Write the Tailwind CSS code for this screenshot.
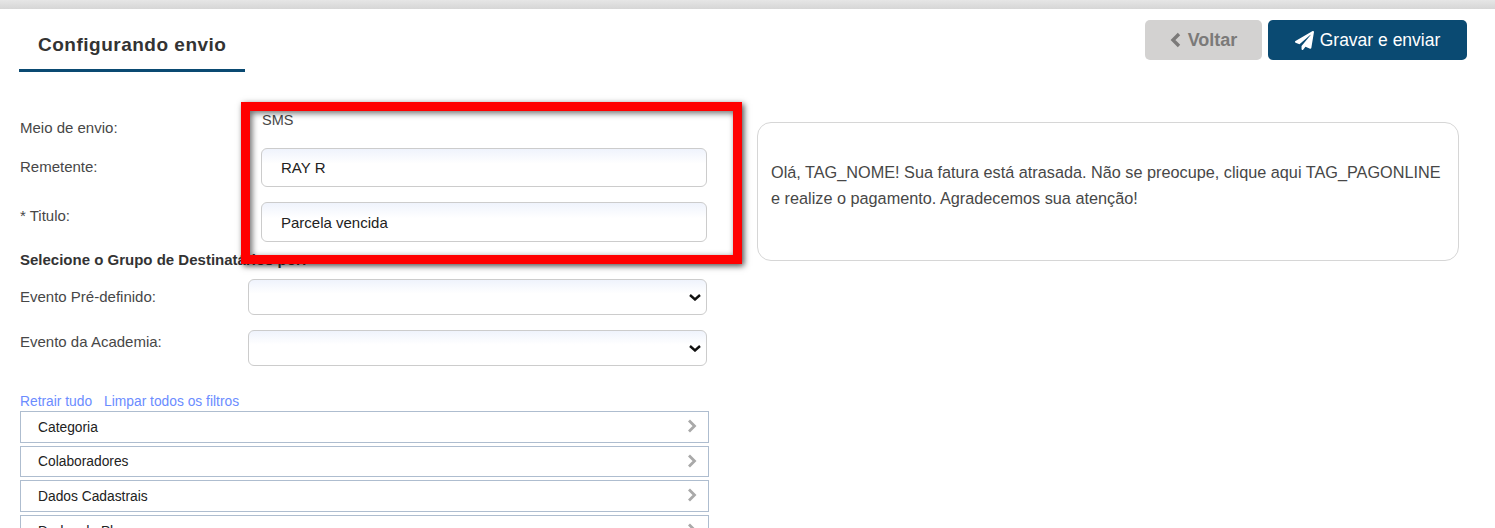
<!DOCTYPE html>
<html lang="pt-BR">
<head>
  <meta charset="UTF-8" />
  <title>Configurando envio</title>
  <script src="https://cdn.jsdelivr.net/npm/@tailwindcss/browser@4"></script>
</head>
<body class="relative h-[528px] overflow-hidden bg-white font-['Liberation_Sans',Arial,sans-serif] text-[15px] text-[#474747]">

  <!-- Top bar -->
  <div class="h-[9px] bg-gradient-to-b from-[#e6e6e6] to-[#d6d6d6]"></div>

  <!-- Header -->
  <div class="flex h-[63px] justify-between pl-[19px] pr-[28px]">
    <div class="h-[63px] w-[226px] border-b-[3px] border-[#0a4a72] pl-[19px] pt-[25px] text-[19px] leading-[22px] font-bold tracking-[0.5px] text-[#333]">Configurando envio</div>
    <div class="flex gap-[6px] pt-[11px]">
      <button class="flex h-[40px] w-[117px] items-center justify-center gap-[7px] rounded-[5px] bg-[#d3d2d1] text-[18px] font-bold text-[#7b7a79]">
        <svg class="h-[16px] w-[11px]" viewBox="0 0 11 16" fill="none" stroke="currentColor" stroke-width="3.4"><polyline points="9,2 3,8 9,14"/></svg>
        Voltar
      </button>
      <button class="flex h-[40px] w-[199px] items-center justify-center gap-[6px] rounded-[5px] bg-[#0a4a72] text-[17.5px] text-white">
        <svg class="h-[19px] w-[19px]" viewBox="0 0 512 512" fill="currentColor"><path d="M476 3.2L12.5 270.6c-18.1 10.4-15.8 35.6 2.2 43.2L121 358.4l287.3-253.2c5.5-4.9 13.3 2.6 8.6 8.3L176 407v80.5c0 23.6 28.5 32.9 42.5 15.8L282 426l124.6 52.2c14.2 6 30.4-2.9 33-18.2l72-432C515 7.8 493.3-6.8 476 3.2z"/></svg>
        Gravar e enviar
      </button>
    </div>
  </div>

  <!-- Body -->
  <div class="flex pl-[20px] pt-[39px]">
    <div class="w-[689px]">
      <div class="flex h-[37px]">
        <div class="w-[241px] pt-[9px] leading-[16px]">Meio de envio:</div>
        <div class="pl-px pt-px text-[14.5px] leading-[16px]">SMS</div>
      </div>
      <div class="flex h-[54px]">
        <div class="w-[241px] pt-[11px] leading-[16px]">Remetente:</div>
        <div class="flex h-[39px] w-[446px] items-center rounded-[6px] border border-[#ccc] bg-gradient-to-b from-[#eff3fc] to-white to-40% pl-[19px] pt-[1px] text-[#222]">RAY R</div>
      </div>
      <div class="flex h-[50px]">
        <div class="w-[241px] pt-[6px] leading-[16px]">* Titulo:</div>
        <div class="flex h-[40px] w-[446px] items-center rounded-[6px] border border-[#ccc] bg-gradient-to-b from-[#eff3fc] to-white to-40% pl-[19px] pt-[3px] text-[#222]">Parcela vencida</div>
      </div>
      <div class="h-[27px] text-[15px] leading-[16px] font-bold text-[#333]">Selecione o Grupo de Destinatários por:</div>
      <div class="flex h-[51px]">
        <div class="w-[228px] pt-[10px] leading-[16px]">Evento Pré-definido:</div>
        <div class="relative h-[36px] w-[459px]">
          <select class="h-[36px] w-full appearance-none rounded-[6px] border border-[#ccc] bg-gradient-to-b from-[#eff3fc] to-white to-40%"></select>
          <svg class="pointer-events-none absolute right-[6px] top-[15px] h-[7px] w-[12px]" viewBox="0 0 12 7" fill="none" stroke="#111" stroke-width="2.4"><polyline points="1,1 6,5.5 11,1"/></svg>
        </div>
      </div>
      <div class="flex h-[63px]">
        <div class="w-[228px] pt-[4px] leading-[16px]">Evento da Academia:</div>
        <div class="relative h-[36px] w-[459px]">
          <select class="h-[36px] w-full appearance-none rounded-[6px] border border-[#ccc] bg-gradient-to-b from-[#eff3fc] to-white to-40%"></select>
          <svg class="pointer-events-none absolute right-[6px] top-[15px] h-[7px] w-[12px]" viewBox="0 0 12 7" fill="none" stroke="#111" stroke-width="2.4"><polyline points="1,1 6,5.5 11,1"/></svg>
        </div>
      </div>
      <div class="flex h-[18px] gap-[12px] pt-px text-[13.8px] leading-[16px] text-[#6b8cff]">
        <a>Retrair tudo</a>
        <a>Limpar todos os filtros</a>
      </div>
      <div class="flex flex-col gap-[3px] text-[13.8px] text-[#222]">
        <div class="flex h-[32px] items-center justify-between border border-[#aebdcf] pl-[17px] pr-[11px]">
          <span class="pt-[2px]">Categoria</span>
          <svg class="h-[14px] w-[10px] -translate-y-px text-[#a9a9a9]" viewBox="0 0 10 14" fill="none" stroke="currentColor" stroke-width="2.8"><polyline points="2,1.5 7.5,7 2,12.5"/></svg>
        </div>
        <div class="flex h-[31px] items-center justify-between border border-[#aebdcf] pl-[17px] pr-[11px]">
          <span class="pt-[2px]">Colaboradores</span>
          <svg class="h-[14px] w-[10px] -translate-y-px text-[#a9a9a9]" viewBox="0 0 10 14" fill="none" stroke="currentColor" stroke-width="2.8"><polyline points="2,1.5 7.5,7 2,12.5"/></svg>
        </div>
        <div class="flex h-[32px] items-center justify-between border border-[#aebdcf] pl-[17px] pr-[11px]">
          <span class="pt-[2px]">Dados Cadastrais</span>
          <svg class="h-[14px] w-[10px] -translate-y-px text-[#a9a9a9]" viewBox="0 0 10 14" fill="none" stroke="currentColor" stroke-width="2.8"><polyline points="2,1.5 7.5,7 2,12.5"/></svg>
        </div>
        <div class="flex h-[32px] items-center justify-between border border-[#aebdcf] pl-[17px] pr-[11px]">
          <span class="pt-[2px]">Dados de Planos</span>
          <svg class="h-[14px] w-[10px] -translate-y-px text-[#a9a9a9]" viewBox="0 0 10 14" fill="none" stroke="currentColor" stroke-width="2.8"><polyline points="2,1.5 7.5,7 2,12.5"/></svg>
        </div>
      </div>
    </div>

    <!-- Message preview -->
    <div class="ml-[48px] mt-[11px] flex h-[139px] w-[702px] items-center rounded-[14px] border border-[#d6d6d6] pb-[14px] pl-[13px] pr-[15px] text-[16.25px] leading-[26px]">
      <p>Olá, TAG_NOME! Sua fatura está atrasada. Não se preocupe, clique aqui TAG_PAGONLINE e realize o pagamento. Agradecemos sua atenção!</p>
    </div>
  </div>

  <!-- Red highlight drawn over the screenshot -->
  <div class="absolute left-[241px] top-[102px] h-[162px] w-[501px] border-[9px] border-[#ff0000] shadow-[2px_2px_6px_rgba(0,0,0,0.7),inset_2px_2px_6px_rgba(0,0,0,0.6)]"></div>
</body>
</html>
